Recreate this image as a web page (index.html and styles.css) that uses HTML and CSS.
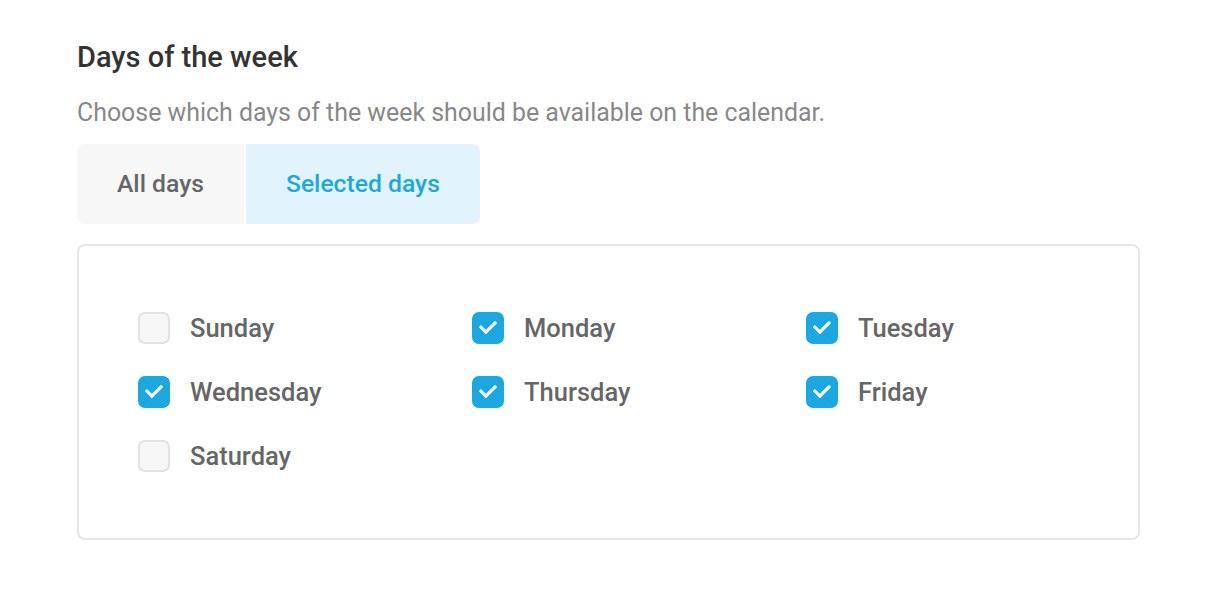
FILE: index.html
```html
<!DOCTYPE html>
<html lang="en">
<head>
    <meta charset="UTF-8">
    <title>Days of the week</title>
    <link rel="stylesheet" href="styles.css">
</head>
<body>
    <div class="section">
        <h2 class="title">Days of the week</h2>
        <p class="desc">Choose which days of the week should be available on the calendar.</p>
        <div class="tabs">
            <div class="tab">All days</div>
            <div class="tab active">Selected days</div>
        </div>
        <div class="days">
            <label class="day"><span class="box"></span>Sunday</label>
            <label class="day"><span class="box checked"></span>Monday</label>
            <label class="day"><span class="box checked"></span>Tuesday</label>
            <label class="day"><span class="box checked"></span>Wednesday</label>
            <label class="day"><span class="box checked"></span>Thursday</label>
            <label class="day"><span class="box checked"></span>Friday</label>
            <label class="day"><span class="box"></span>Saturday</label>
        </div>
    </div>
</body>
</html>
```

FILE: styles.css
```css
body {
    margin: 0;
    background: #fff;
    font-family: Roboto, "Liberation Sans", sans-serif;
}
.section {
    width: 1063px;
    padding: 38px 0 0 77px;
}
.title {
    margin: 0;
    font-size: 29px;
    font-weight: 500;
    color: #333;
    line-height: 38px;
}
.desc {
    margin: 20px 0 0;
    font-size: 24.9px;
    color: #888;
    line-height: 34px;
}
.tabs {
    display: flex;
    gap: 2px;
    margin-top: 14px;
}
.tab {
    height: 80px;
    line-height: 80px;
    padding: 0 40px;
    font-size: 24.7px;
    font-weight: 500;
    color: #666;
    background: #f7f7f7;
}
.tab:first-child {
    border-radius: 8px 0 0 8px;
}
.tab:last-child {
    border-radius: 0 8px 8px 0;
}
.tab.active {
    background: #e1f4fd;
    color: #1ba8e0;
}
.days {
    margin-top: 20px;
    border: 2px solid #e6e6e6;
    border-radius: 8px;
    padding: 66px 59px 66px;
    display: grid;
    grid-template-columns: repeat(3, 1fr);
    column-gap: 61px;
    row-gap: 32px;
}
.day {
    display: flex;
    align-items: center;
    gap: 20px;
    height: 32px;
    font-size: 25.5px;
    font-weight: 500;
    color: #666;
}
.box {
    flex: none;
    width: 32px;
    height: 32px;
    box-sizing: border-box;
    border: 2px solid #e2e2e2;
    border-radius: 7px;
    background: #f7f7f7;
    position: relative;
}
.box.checked {
    border-color: #1ba8e0;
    background: #1ba8e0;
}
.box.checked::after {
    content: "";
    position: absolute;
    left: 9px;
    top: 3px;
    width: 7px;
    height: 13px;
    border: solid #fff;
    border-width: 0 3px 3px 0;
    transform: rotate(45deg);
}
```
